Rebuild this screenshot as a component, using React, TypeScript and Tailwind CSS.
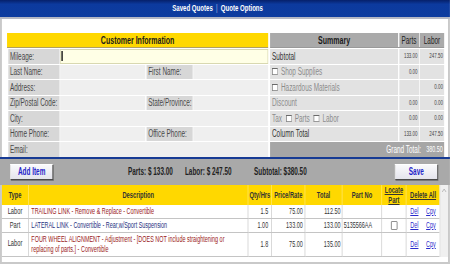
import React from "react";

const FONT = "font-['Liberation_Sans','Arial',sans-serif]";

function Check() {
  return (
    <span className="inline-block w-[9px] h-[7px] bg-white border border-[#9a9a9a] border-t-[#6a6a6a] border-l-[#6a6a6a] mr-[5px] shrink-0" />
  );
}

function CustRow({ label, label2, first }: { label: string; label2?: string; first?: boolean }) {
  const lbl = "bg-[#d7d7d7] text-[#4a4a4a] text-[10px] pl-[3px] flex items-center";
  return (
    <div className="flex h-[14.5px] gap-[1.5px]">
      <div className={`${lbl} w-[80px] ml-[1.5px]`}>{label}</div>
      {first ? (
        <div className="flex-1 bg-[#ffffe6] border border-[#d8d8b0] flex items-center">
          <div className="w-[2px] h-[10px] bg-black ml-[1px]" />
        </div>
      ) : label2 ? (
        <>
          <div className="w-[133px] bg-[#efefef]" />
          <div className={`${lbl} w-[72px]`}>{label2}</div>
          <div className="flex-1 bg-[#efefef]" />
        </>
      ) : (
        <div className="flex-1 bg-[#efefef]" />
      )}
    </div>
  );
}

function SumRow({
  children,
  parts,
  labor,
  dark,
}: {
  children: React.ReactNode;
  parts?: string;
  labor?: string;
  dark?: boolean;
}) {
  return (
    <div className="flex h-[14.5px] gap-[1.5px]">
      <div
        className={`w-[200px] bg-[#e2e2e2] flex items-center pl-[3px] text-[10px] ${
          dark ? "text-[#333]" : "text-[#8c8c8c]"
        }`}
      >
        {children}
      </div>
      <div className="w-[31px] bg-[#e2e2e2] flex items-center justify-end pr-[2px] text-[7px] text-[#444]">
        {parts}
      </div>
      <div className="flex-1 bg-[#e2e2e2] flex items-center justify-end pr-[2px] text-[7px] text-[#444]">
        {labor}
      </div>
    </div>
  );
}

function Btn({ children }: { children: React.ReactNode }) {
  return (
    <div className="w-[67px] h-[16px] flex items-center justify-center bg-[linear-gradient(#fafafc,#e4e4ec)] border border-t-white border-l-white border-r-[#4a4a4a] border-b-[#4a4a4a] shadow-[1px_1px_0_#777] text-[10px] font-bold text-[#2424c8]">
      {children}
    </div>
  );
}

const cell = "border-r border-b border-[#c4c4c4] flex items-center";
const head = "border-r border-[#ffe97a] flex items-center justify-center text-center font-bold text-[9px] text-[#333] leading-[10px]";

type Row = {
  type: string;
  desc: React.ReactNode;
  color: string;
  qty: string;
  price: string;
  total: string;
  part?: string;
  locate?: boolean;
  h: string;
};

const rows: Row[] = [
  {
    type: "Labor",
    desc: "TRAILING LINK - Remove & Replace - Convertible",
    color: "text-[#9a2222]",
    qty: "1.5",
    price: "75.00",
    total: "112.50",
    h: "h-[14px]",
  },
  {
    type: "Part",
    desc: "LATERAL LINK - Convertible - Rear,w/Sport Suspension",
    color: "text-[#24307e]",
    qty: "1.00",
    price: "133.00",
    total: "133.00",
    part: "5135566AA",
    locate: true,
    h: "h-[14px]",
  },
  {
    type: "Labor",
    desc: (
      <>
        FOUR WHEEL ALIGNMENT - Adjustment - [DOES NOT include straightening or
        <br />
        replacing of parts.] - Convertible
      </>
    ),
    color: "text-[#9a2222]",
    qty: "1.8",
    price: "75.00",
    total: "135.00",
    h: "h-[24px]",
  },
];

const grid = "grid grid-cols-[42px_343px_37px_52px_58px_62px_38px_1fr]";

export default function App() {
  return (
    <div className="w-[450px] h-[264px] overflow-hidden bg-white">
      <div className={`w-[703px] h-[264px] origin-top-left scale-x-[0.64] flex flex-col ${FONT}`}>
        {/* top nav */}
        <div className="h-[17px] bg-[linear-gradient(#06206a,#0c3a9e_25%,#0d3c9f)] flex items-center justify-center pr-[23px] text-white font-bold text-[9.5px]">
          <span>Saved Quotes</span>
          <span className="mx-[5px] text-[#aab8e0] font-normal">|</span>
          <span>Quote Options</span>
        </div>
        <div className="h-[2px] bg-[#b4b8c4]" />

        {/* info + summary */}
        <div className="flex-none h-[137.5px] border-x-[3px] border-[#c9c9c9] pt-[14px] pl-[8px] flex gap-[3px]">
          <div className="w-[408px] flex flex-col gap-[1px]">
            <div className="h-[14px] bg-[#ffd800] flex items-center justify-center font-bold text-[11px] text-[#1a1a1a]">
              Customer Information
            </div>
            <div className="h-[1px] bg-[#b0a060] -mt-[1px]" />
            <CustRow label="Mileage:" first />
            <CustRow label="Last Name:" label2="First Name:" />
            <CustRow label="Address:" />
            <CustRow label="Zip/Postal Code:" label2="State/Province:" />
            <CustRow label="City:" />
            <CustRow label="Home Phone:" label2="Office Phone:" />
            <CustRow label="Email:" />
          </div>
          <div className="w-[272px] flex flex-col gap-[1px]">
            <div className="h-[14px] flex gap-[1.5px]">
              <div className="w-[200px] bg-[#aaaaaa] flex items-center justify-center font-bold text-[11px] text-[#1a1a1a]">
                Summary
              </div>
              <div className="w-[31px] bg-[#aaaaaa] flex items-center justify-center text-[10px] text-[#222]">Parts</div>
              <div className="flex-1 bg-[#aaaaaa] flex items-center justify-center text-[10px] text-[#222]">Labor</div>
            </div>
            <div className="h-[1px] bg-[#999] -mt-[1px]" />
            <SumRow parts="133.00" labor="247.50" dark>
              Subtotal
            </SumRow>
            <SumRow parts="0.00">
              <Check />
              Shop Supplies
            </SumRow>
            <SumRow labor="0.00">
              <Check />
              Hazardous Materials
            </SumRow>
            <SumRow parts="0.00" labor="0.00">
              Discount
            </SumRow>
            <SumRow parts="0.00" labor="0.00">
              <span className="mr-[6px]">Tax</span>
              <Check />
              <span className="mr-[6px]">Parts</span>
              <Check />
              Labor
            </SumRow>
            <SumRow parts="133.00" labor="247.50" dark>
              Column Total
            </SumRow>
            <div className="h-[14.5px] bg-[#a6a6a6] flex items-center justify-end pr-[2px] text-white">
              <span className="text-[10px]">Grand Total:</span>
              <span className="text-[8.5px] ml-[8px]">380.50</span>
            </div>
          </div>
        </div>

        {/* blue divider */}
        <div className="h-[2px] bg-[#173b94]" />

        {/* toolbar */}
        <div className="h-[26px] bg-[#a9a9a9] flex items-center pl-[16px] text-[10px] font-bold text-[#222]">
          <Btn>Add Item</Btn>
          <span className="ml-[117px] w-[89px]">Parts: $ 133.00</span>
          <span className="w-[108px]">Labor: $ 247.50</span>
          <span className="flex-1">Subtotal: $380.50</span>
          <Btn>Save</Btn>
          <div className="w-[19px]" />
        </div>

        {/* items table */}
        <div className="flex-1 border-x-[3px] border-b-[2px] border-[#c9c9c9] flex flex-col">
          <div className="flex">
            <div className="w-[684px]">
              <div className={`${grid} h-[20px] bg-[#ffd800]`}>
                <div className={head}>Type</div>
                <div className={head}>Description</div>
                <div className={head}>Qty/Hrs</div>
                <div className={head}>Price/Rate</div>
                <div className={head}>Total</div>
                <div className={head}>Part No</div>
                <div className={`${head} text-[#1c2a8c] underline`}>
                  Locate
                  <br />
                  Part
                </div>
                <div className={`${head} text-[#1c2a8c] underline border-r-0`}>Delete All</div>
              </div>
              {rows.map((r, i) => (
                <div key={i} className={`${grid} ${r.h} text-[8.5px]`}>
                  <div className={`${cell} justify-center text-[#333] text-[9px]`}>{r.type}</div>
                  <div className={`${cell} pl-[4px] leading-[10px] ${r.color}`}>
                    <span>{r.desc}</span>
                  </div>
                  <div className={`${cell} justify-end pr-[5px] text-[#333]`}>{r.qty}</div>
                  <div className={`${cell} justify-end pr-[3px] text-[#333]`}>{r.price}</div>
                  <div className={`${cell} justify-end pr-[2px] text-[#333]`}>{r.total}</div>
                  <div className={`${cell} pl-[2px] text-[#333]`}>{r.part}</div>
                  <div className={`${cell} justify-center`}>
                    {r.locate && (
                      <span className="inline-block w-[10px] h-[9px] rounded-[1px] border border-[#777] bg-white" />
                    )}
                  </div>
                  <div className={`${cell} justify-center gap-[12px] text-[#2a2acc] underline border-r-0`}>
                    <span>Del</span>
                    <span>Cpy</span>
                  </div>
                </div>
              ))}
            </div>
            <div className="flex-1 bg-[#f0f0f0] border-l border-[#d8d8d8] flex justify-center pt-[3px]">
              <svg width="8" height="5" viewBox="0 0 8 5">
                <path d="M1 4 L4 1 L7 4" fill="none" stroke="#b0b0b0" strokeWidth="1" />
              </svg>
            </div>
          </div>
          <div className="flex-1 bg-white" />
        </div>
      </div>
    </div>
  );
}
